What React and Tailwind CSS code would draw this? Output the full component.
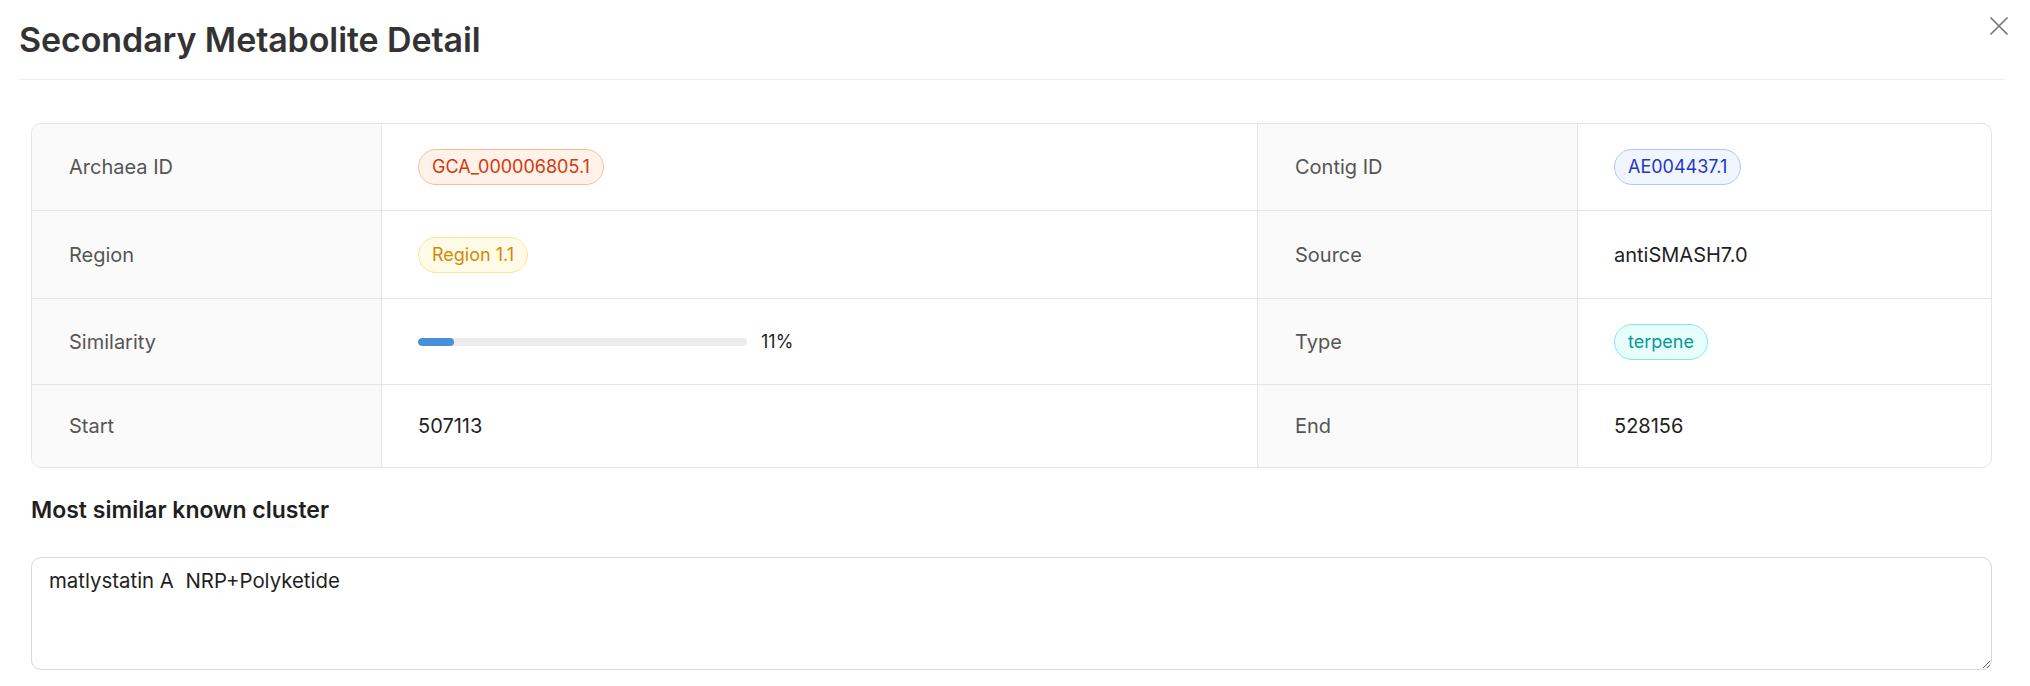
const Tag = ({ color, children }) => {
  const styles = {
    volcano: 'bg-[#fff2e8] border-[#ffbb96] text-[#d4380d]',
    gold: 'bg-[#fffbe6] border-[#ffe58f] text-[#d48806]',
    geekblue: 'bg-[#f0f5ff] border-[#adc6ff] text-[#1d39c4]',
    cyan: 'bg-[#e6fffb] border-[#87e8de] text-[#08979c]'
  }
  return (
    <span
      className={`inline-flex items-center h-[36px] px-[13px] rounded-full border text-[18px] leading-none ${styles[color]}`}
    >
      {children}
    </span>
  )
}

const Label = ({ children, last }) => (
  <div
    className={`flex items-center pl-[37px] bg-[#fafafa] text-[#555] border-r border-[#e5e5e5] ${
      last ? '' : 'border-b'
    }`}
  >
    {children}
  </div>
)

const Value = ({ children, last, right }) => (
  <div
    className={`flex items-center pl-[36px] text-[#1f1f1f] border-[#e5e5e5] ${last ? '' : 'border-b'} ${
      right ? '' : 'border-r'
    }`}
  >
    {children}
  </div>
)

export default function App() {
  const similarity = 11

  return (
    <div className="relative min-h-screen bg-white pl-[19px] pr-[25px] font-['Inter','Liberation_Sans',sans-serif]">
      <div className="h-[80px] flex items-center border-b border-[#ededed]">
        <h1 className="text-[34px] font-semibold text-[#333] tracking-[-0.1px]">Secondary Metabolite Detail</h1>
      </div>
      {/* close button */}
      <button className="absolute left-[1990px] top-[17px] w-[18px] h-[18px]">
        <svg width="18" height="18" viewBox="0 0 18 18" fill="none" stroke="#777" strokeWidth="1.7" strokeLinecap="round">
          <path d="M1 1L17 17M17 1L1 17" />
        </svg>
      </button>

      <div className="pl-[12px] pr-[13px] pt-[43px]">
        <div className="grid grid-cols-[350px_876px_320px_1fr] grid-rows-[87px_88px_86px_82px] border border-[#e5e5e5] rounded-[10px] overflow-hidden text-[20px]">
          <Label>Archaea ID</Label>
          <Value>
            <Tag color="volcano">GCA_000006805.1</Tag>
          </Value>
          <Label>Contig ID</Label>
          <Value right>
            <Tag color="geekblue">AE004437.1</Tag>
          </Value>

          <Label>Region</Label>
          <Value>
            <Tag color="gold">Region 1.1</Tag>
          </Value>
          <Label>Source</Label>
          <Value right>antiSMASH7.0</Value>

          <Label>Similarity</Label>
          <Value>
            <div className="flex items-center">
              <div className="w-[329px] h-[8px] rounded-full bg-[#ececec] overflow-hidden">
                <div className="h-full rounded-full bg-[#4a8fdc]" style={{ width: `${similarity}%` }} />
              </div>
              <span className="ml-[14px] text-[18px] text-[#1f1f1f]">{similarity}%</span>
            </div>
          </Value>
          <Label>Type</Label>
          <Value right>
            <Tag color="cyan">terpene</Tag>
          </Value>

          <Label last>Start</Label>
          <Value last>507113</Value>
          <Label last>End</Label>
          <Value last right>528156</Value>
        </div>

        <h2 className="mt-[27px] text-[23px] leading-[30px] font-semibold text-[#1f1f1f]">Most similar known cluster</h2>

        <textarea
          readOnly
          defaultValue="matlystatin A  NRP+Polyketide"
          className="mt-[32px] block w-full h-[113px] px-[17px] pt-[7px] border border-[#d9d9d9] rounded-[10px] text-[20.4px] leading-[31px] text-[#1f1f1f] outline-none resize-y"
        />
      </div>
    </div>
  )
}
